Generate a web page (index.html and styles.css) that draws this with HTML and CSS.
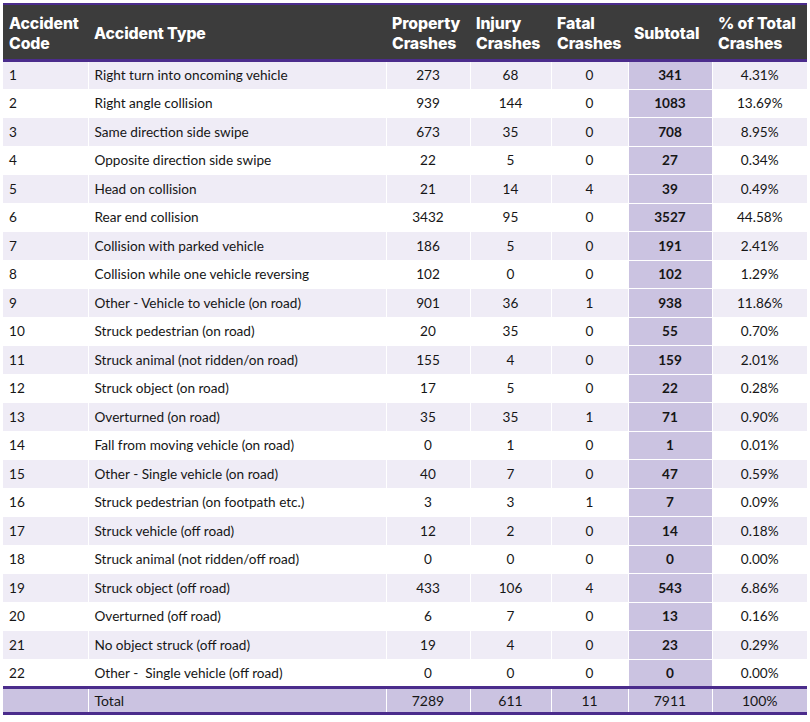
FILE: index.html
```html
<!DOCTYPE html>
<html>
<head>
<meta charset="utf-8">
<link rel="stylesheet" href="styles.css">
</head>
<body>
<div class="wrap">
<table class="crash">
<colgroup>
<col class="c-code"><col class="c-type"><col class="c-prop"><col class="c-inj"><col class="c-fat"><col class="c-sub"><col class="c-pct">
</colgroup>
<thead>
<tr><th>Accident<br>Code</th><th>Accident Type</th><th>Property<br>Crashes</th><th>Injury<br>Crashes</th><th>Fatal<br>Crashes</th><th>Subtotal</th><th>% of Total<br>Crashes</th></tr>
</thead>
<tbody>
<tr><td>1</td><td>Right turn into oncoming vehicle</td><td class="n">273</td><td class="n">68</td><td class="n">0</td><td class="s">341</td><td class="n">4.31%</td></tr>
<tr><td>2</td><td>Right angle collision</td><td class="n">939</td><td class="n">144</td><td class="n">0</td><td class="s">1083</td><td class="n">13.69%</td></tr>
<tr><td>3</td><td>Same direction side swipe</td><td class="n">673</td><td class="n">35</td><td class="n">0</td><td class="s">708</td><td class="n">8.95%</td></tr>
<tr><td>4</td><td>Opposite direction side swipe</td><td class="n">22</td><td class="n">5</td><td class="n">0</td><td class="s">27</td><td class="n">0.34%</td></tr>
<tr><td>5</td><td>Head on collision</td><td class="n">21</td><td class="n">14</td><td class="n">4</td><td class="s">39</td><td class="n">0.49%</td></tr>
<tr><td>6</td><td>Rear end collision</td><td class="n">3432</td><td class="n">95</td><td class="n">0</td><td class="s">3527</td><td class="n">44.58%</td></tr>
<tr><td>7</td><td>Collision with parked vehicle</td><td class="n">186</td><td class="n">5</td><td class="n">0</td><td class="s">191</td><td class="n">2.41%</td></tr>
<tr><td>8</td><td>Collision while one vehicle reversing</td><td class="n">102</td><td class="n">0</td><td class="n">0</td><td class="s">102</td><td class="n">1.29%</td></tr>
<tr><td>9</td><td>Other - Vehicle to vehicle (on road)</td><td class="n">901</td><td class="n">36</td><td class="n">1</td><td class="s">938</td><td class="n">11.86%</td></tr>
<tr><td>10</td><td>Struck pedestrian (on road)</td><td class="n">20</td><td class="n">35</td><td class="n">0</td><td class="s">55</td><td class="n">0.70%</td></tr>
<tr><td>11</td><td>Struck animal (not ridden/on road)</td><td class="n">155</td><td class="n">4</td><td class="n">0</td><td class="s">159</td><td class="n">2.01%</td></tr>
<tr><td>12</td><td>Struck object (on road)</td><td class="n">17</td><td class="n">5</td><td class="n">0</td><td class="s">22</td><td class="n">0.28%</td></tr>
<tr><td>13</td><td>Overturned (on road)</td><td class="n">35</td><td class="n">35</td><td class="n">1</td><td class="s">71</td><td class="n">0.90%</td></tr>
<tr><td>14</td><td>Fall from moving vehicle (on road)</td><td class="n">0</td><td class="n">1</td><td class="n">0</td><td class="s">1</td><td class="n">0.01%</td></tr>
<tr><td>15</td><td>Other - Single vehicle (on road)</td><td class="n">40</td><td class="n">7</td><td class="n">0</td><td class="s">47</td><td class="n">0.59%</td></tr>
<tr><td>16</td><td>Struck pedestrian (on footpath etc.)</td><td class="n">3</td><td class="n">3</td><td class="n">1</td><td class="s">7</td><td class="n">0.09%</td></tr>
<tr><td>17</td><td>Struck vehicle (off road)</td><td class="n">12</td><td class="n">2</td><td class="n">0</td><td class="s">14</td><td class="n">0.18%</td></tr>
<tr><td>18</td><td>Struck animal (not ridden/off road)</td><td class="n">0</td><td class="n">0</td><td class="n">0</td><td class="s">0</td><td class="n">0.00%</td></tr>
<tr><td>19</td><td>Struck object (off road)</td><td class="n">433</td><td class="n">106</td><td class="n">4</td><td class="s">543</td><td class="n">6.86%</td></tr>
<tr><td>20</td><td>Overturned (off road)</td><td class="n">6</td><td class="n">7</td><td class="n">0</td><td class="s">13</td><td class="n">0.16%</td></tr>
<tr><td>21</td><td>No object struck (off road)</td><td class="n">19</td><td class="n">4</td><td class="n">0</td><td class="s">23</td><td class="n">0.29%</td></tr>
<tr><td>22</td><td>Other -&nbsp; Single vehicle (off road)</td><td class="n">0</td><td class="n">0</td><td class="n">0</td><td class="s">0</td><td class="n">0.00%</td></tr>
</tbody>
<tfoot>
<tr><td></td><td>Total</td><td class="n">7289</td><td class="n">611</td><td class="n">11</td><td class="n">7911</td><td class="n">100%</td></tr>
</tfoot>
</table>
</div>
</body>
</html>
```
FILE: styles.css
```css
html, body { margin: 0; padding: 0; background: #ffffff; }
.wrap { padding: 3px 3px 0 3px; }
.crash {
  width: 804px;
  border-collapse: collapse;
  table-layout: fixed;
  font-family: "Lato", "Liberation Sans", sans-serif;
  font-size: 13.6px;
  color: #161616;
}
.c-code { width: 85px; }
.c-type { width: 298px; }
.c-prop { width: 84px; }
.c-inj { width: 81px; }
.c-fat { width: 77px; }
.c-sub { width: 84px; }
.c-pct { width: 95px; }
.crash thead tr {
  background: #3c3c3c;
  border-top: 2px solid #4b2c8c;
  border-bottom: 3px solid #4b2c8c;
}
.crash th {
  height: 50px;
  padding: 4px 6px 0 6px;
  text-align: left;
  vertical-align: middle;
  color: #ffffff;
  font-family: "Inter", "Open Sans", sans-serif;
  font-weight: 800;
  font-size: 15.8px;
  line-height: 20.5px;
  letter-spacing: -0.1px;
}
.crash tbody tr { height: 28.5px; }
.crash tbody tr:nth-child(odd) { background: #efecf6; }
.crash td {
  padding: 0 6px;
  border-left: 1px solid #ffffff;
  border-top: 1px solid #ffffff;
  vertical-align: middle;
  white-space: nowrap;
}
.crash td:first-child { border-left: none; }
.crash td.n { text-align: center; }
.crash td.s { text-align: center; font-weight: 700; background: #cbc3e1; }
.crash tfoot tr {
  height: 26px;
  background: #cbc3e1;
  border-top: 3px solid #4b2c8c;
  border-bottom: 3px solid #4b2c8c;
}
.crash tfoot td { border-top: none; font-size: 14px; }
```
